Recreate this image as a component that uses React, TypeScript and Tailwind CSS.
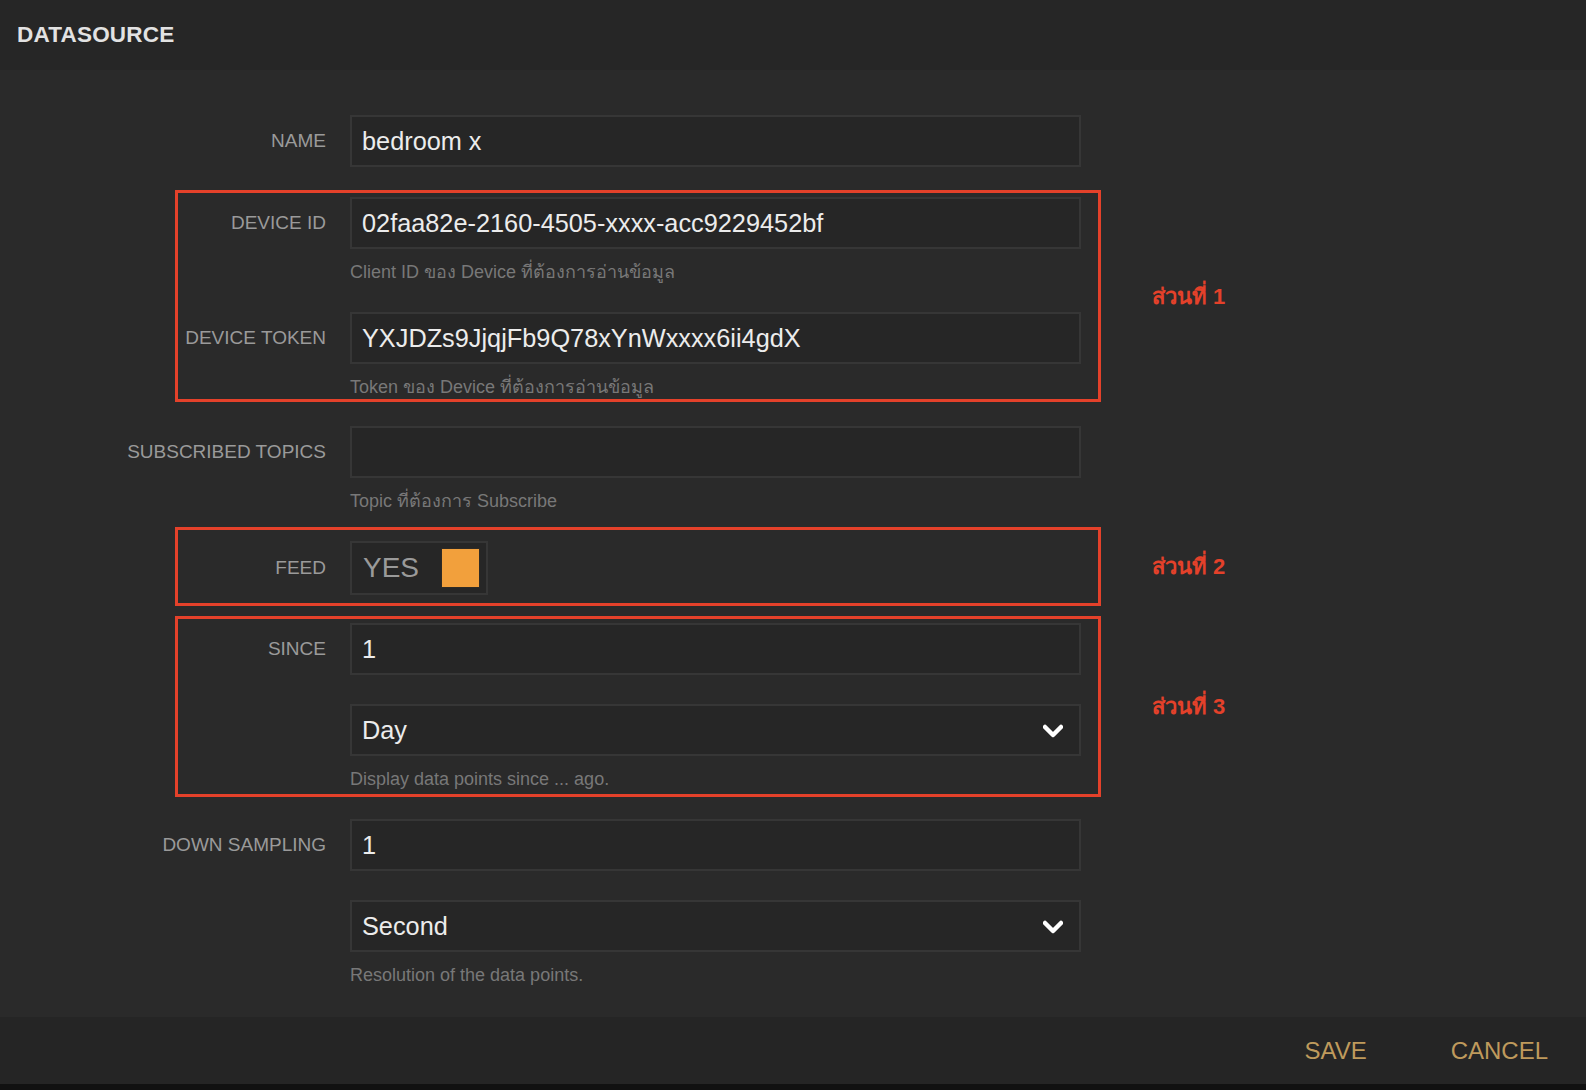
import React from "react";

const font = { fontFamily: '"Liberation Sans", "Noto Sans", sans-serif' };

const Label: React.FC<{ text?: string }> = ({ text }) => (
  <div className="w-[148px] flex justify-end whitespace-nowrap text-[19px] text-[#9a9a9a]">
    {text}
  </div>
);

const TextBox: React.FC<{ value?: string; select?: boolean }> = ({ value, select }) => (
  <div className="h-[52px] w-[731px] border-2 border-[#363636] bg-[#262626] pl-[10px] pr-[16px] pt-[2px] flex items-center justify-between text-[25.3px] text-[#ececec]">
    <span>{value}</span>
    {select && (
      <svg width="20" height="14" viewBox="0 0 20 14">
        <polyline
          points="2,3 10,11 18,3"
          fill="none"
          stroke="#ffffff"
          strokeWidth="4.5"
          strokeLinecap="round"
          strokeLinejoin="round"
        />
      </svg>
    )}
  </div>
);

const Row: React.FC<{ label?: string; children: React.ReactNode; className?: string }> = ({
  label,
  children,
  className = "",
}) => (
  <div className={`flex items-center ${className}`}>
    <Label text={label} />
    <div className="ml-[24px]">{children}</div>
  </div>
);

const Help: React.FC<{ text: string }> = ({ text }) => (
  <div className="ml-[172px] mt-[13px] h-[20px] leading-[20px] text-[18px] text-[#787878] whitespace-nowrap">
    {text}
  </div>
);

const Group: React.FC<{
  red?: boolean;
  note?: string;
  outer?: string;
  className?: string;
  children: React.ReactNode;
}> = ({ red, note, outer = "", className = "", children }) => (
  <div className={`flex items-center ${outer}`}>
    <div
      className={`w-[926px] border-[3px] ${red ? "border-[#e4412a]" : "border-transparent"} ${className}`}
    >
      {children}
    </div>
    {note && (
      <span className="ml-[51px] text-[22px] font-bold text-[#e4412a] whitespace-nowrap">{note}</span>
    )}
  </div>
);

export default function App() {
  return (
    <div className="h-[1090px] w-full flex flex-col bg-[#2a2a2a]" style={font}>
      <div className="h-[70px] shrink-0 bg-[#262626] pl-[17px] flex items-center">
        <h1 className="text-[22.5px] font-bold text-[#e2e2e2] tracking-[0.2px]">DATASOURCE</h1>
      </div>

      <div className="flex-1 pt-[42px] pl-[175px]">
        <Group>
          <Row label="NAME">
            <TextBox value="bedroom x" />
          </Row>
        </Group>

        <Group red note="ส่วนที่ 1" outer="mt-[20px]" className="pt-[4px] pb-[2px]">
          <Row label="DEVICE ID">
            <TextBox value="02faa82e-2160-4505-xxxx-acc9229452bf" />
          </Row>
          <Help text="Client ID ของ Device ที่ต้องการอ่านข้อมูล" />
          <Row label="DEVICE TOKEN" className="mt-[30px]">
            <TextBox value="YXJDZs9JjqjFb9Q78xYnWxxxx6ii4gdX" />
          </Row>
          <Help text="Token ของ Device ที่ต้องการอ่านข้อมูล" />
        </Group>

        <Group className="pt-[21px] pb-[13px]">
          <Row label="SUBSCRIBED TOPICS">
            <TextBox />
          </Row>
          <Help text="Topic ที่ต้องการ Subscribe" />
        </Group>

        <Group red note="ส่วนที่ 2" className="pt-[11px] pb-[8px]">
          <Row label="FEED">
            <div className="h-[54px] w-[138px] border-2 border-[#363636] bg-[#262626] pl-[11px] pr-[6px] flex items-center justify-between">
              <span className="text-[28px] text-[#9a9a9a]">YES</span>
              <div className="h-[40px] w-[39px] bg-[#f2a03c] border border-[#2e2a24]" />
            </div>
          </Row>
        </Group>

        <Group red note="ส่วนที่ 3" outer="mt-[10px]" className="pt-[4px] pb-[5px]">
          <Row label="SINCE">
            <TextBox value="1" />
          </Row>
          <Row className="mt-[29px]">
            <TextBox value="Day" select />
          </Row>
          <Help text="Display data points since ... ago." />
        </Group>

        <Group className="pt-[19px]">
          <Row label="DOWN SAMPLING">
            <TextBox value="1" />
          </Row>
          <Row className="mt-[29px]">
            <TextBox value="Second" select />
          </Row>
          <Help text="Resolution of the data points." />
        </Group>
      </div>

      <div className="h-[67px] shrink-0 bg-[#252525] flex items-center justify-end pr-[38px] gap-[84px] text-[24px] text-[#bf9a5c]">
        <button>SAVE</button>
        <button>CANCEL</button>
      </div>
      <div className="h-[6px] shrink-0 bg-[#111111]" />
    </div>
  );
}
